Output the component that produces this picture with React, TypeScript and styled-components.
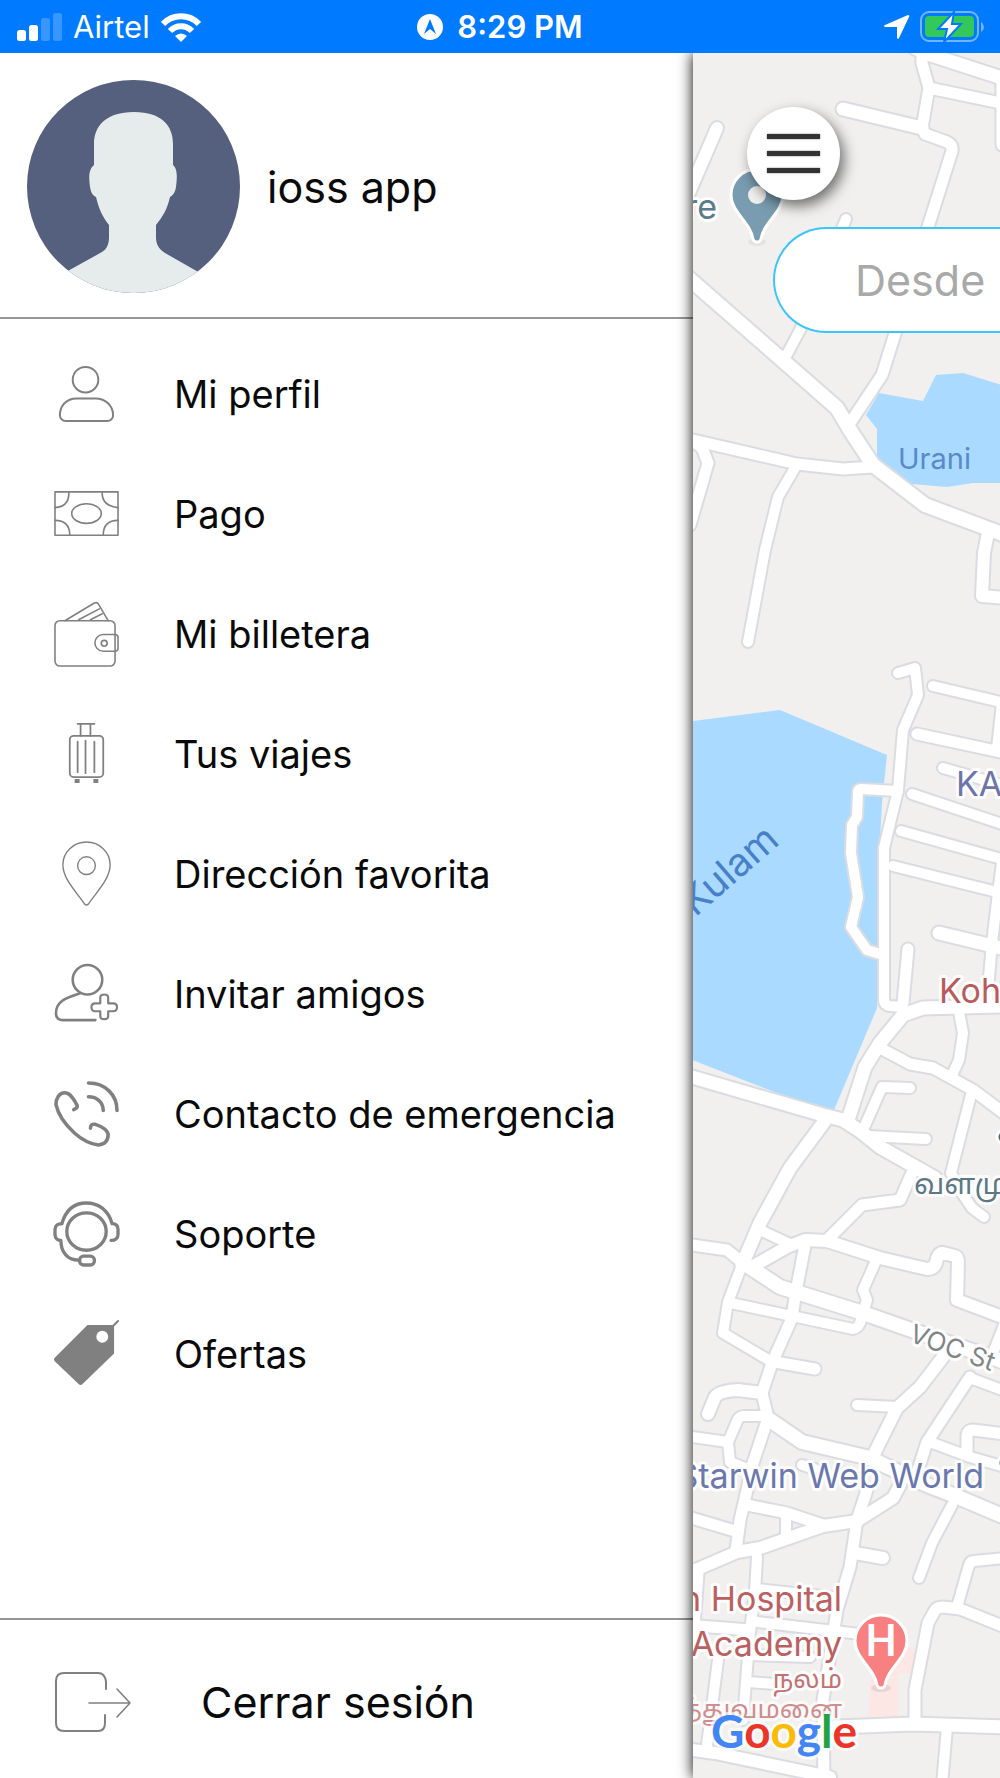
import React from "react";
import styled, { createGlobalStyle } from "styled-components";

const GlobalStyle = createGlobalStyle`
  *, *::before, *::after { box-sizing: border-box; }
  html, body, #root { height: 100%; }
  body {
    margin: 0;
    background: #fff;
    color: #0a0a0a;
    font-family: Inter, "Noto Sans", "Liberation Sans", sans-serif;
  }
`;

const Screen = styled.div`
  display: flex;
  flex-direction: column;
  min-height: 100%;
  overflow: hidden;
`;

/* Status bar */

const StatusBar = styled.header`
  position: relative;
  z-index: 2;
  display: grid;
  grid-template-columns: 1fr auto 1fr;
  align-items: center;
  height: 53px;
  padding: 0 16px;
  background: #007aff;
  color: #fff;
  font-size: 31px;
  line-height: 36px;
`;

const StatusGroup = styled.div<{ $end?: boolean; $gap: number }>`
  display: flex;
  align-items: center;
  justify-content: ${(p) => (p.$end ? "flex-end" : "flex-start")};
  gap: ${(p) => p.$gap}px;
`;

const Clock = styled.time`
  font-weight: 600;
`;

/* Page body */

const Body = styled.div`
  display: flex;
  flex: 1;
`;

const Drawer = styled.aside`
  display: flex;
  flex-direction: column;
  flex: 0 0 69.3%;
`;

const Profile = styled.div`
  display: flex;
  align-items: center;
  gap: 27px;
  padding: 27px 27px 24px;
  border-bottom: 2px solid #969696;
`;

const Avatar = styled.svg`
  flex: none;
  width: 213px;
  height: 213px;
  border-radius: 50%;
`;

const UserName = styled.h1`
  margin: 0;
  font-size: 43px;
  font-weight: 400;
  line-height: 54px;
`;

const MenuList = styled.ul`
  flex: 1;
  margin: 0;
  padding: 15px 0 0;
  list-style: none;
`;

const MenuLink = styled.a`
  display: flex;
  align-items: center;
  gap: 55px;
  height: 120px;
  padding: 0 54px;
  color: inherit;
  font-size: 38px;
  line-height: 48px;
  text-decoration: none;
  white-space: nowrap;
`;

const LineIcon = styled.svg<{ $w?: number; $h?: number }>`
  flex: none;
  width: ${(p) => p.$w ?? 65}px;
  height: ${(p) => p.$h ?? 65}px;
  overflow: visible;
  fill: none;
  stroke: #808080;
  stroke-width: 2;
  stroke-linecap: round;
  stroke-linejoin: round;
`;

const LogoutButton = styled.button`
  display: flex;
  align-items: center;
  gap: 68px;
  height: 160px;
  padding: 6px 55px 0;
  border: 0;
  border-top: 2px solid #969696;
  background: none;
  color: inherit;
  font: inherit;
  font-size: 43px;
  line-height: 54px;
  cursor: pointer;
`;

/* Map side */

const MapPane = styled.main`
  position: relative;
  flex: 1;
  min-width: 0;
  background: #f1f0ef;
  box-shadow: 0 0 14px #000;
`;

const MapCanvas = styled.svg`
  position: absolute;
  inset: 0;
  width: 100%;
  height: 100%;
  font-family: Inter, "Noto Sans", "Noto Sans Tamil", sans-serif;
`;

const MenuToggle = styled.button`
  position: absolute;
  top: 54px;
  left: 54px;
  display: flex;
  flex-direction: column;
  align-items: center;
  justify-content: center;
  gap: 12px;
  width: 93px;
  height: 93px;
  padding: 0;
  border: 0;
  border-radius: 50%;
  background: #fff;
  box-shadow: 4px 6px 14px rgba(0, 0, 0, 0.55);
  cursor: pointer;
`;

const ToggleBar = styled.span`
  width: 53px;
  height: 5px;
  background: #333;
  box-shadow: 0 0 2px #777;
`;

const OriginInput = styled.input`
  position: absolute;
  top: 174px;
  right: 0;
  left: 80px;
  height: 106px;
  padding: 0 0 0 80px;
  border: 2px solid #3cc5fa;
  border-right: 0;
  border-radius: 53px 0 0 53px;
  outline: 0;
  background: #fff;
  font: inherit;
  font-size: 43px;
  &::placeholder { color: #a9a9a9; opacity: 1; }
`;

const Halo = styled.text<{ $faint?: boolean }>`
  paint-order: stroke;
  stroke: #fff;
  stroke-opacity: ${(p) => (p.$faint ? 0.7 : 0.9)};
  stroke-width: 6px;
  stroke-linejoin: round;
`;

type Road = [width: number, d: string];

const roads: Road[] = [
  [10, "M922 45V63L929 88L922 128L925 134L947 142Q953 145 952 151L928 227L893 340L882 375L850 423"],
  [12, "M843 109L922 128"],
  [10, "M929 88L1005 104"],
  [12, "M915 48L925 53L1005 79"],
  [10, "M1002 80V145"],
  [11, "M717 128L688 195"],
  [9, "M846 219L800 330L785 358"],
  [13, "M685 275L740 323L837 408L850 430L873 465L925 505L1005 535"],
  [10, "M693 440L797 464L843 469L873 467"],
  [10, "M690 441Q700 444 703 450L708 463L690 525"],
  [9, "M796 466L778 497L765 550L748 642"],
  [11, "M988 533L984 553L982 596L1005 598"],
  [9, "M898 673L915 668L918 695L903 730L898 790L884 848V1000Q884 1005 890 1006L902 1007"],
  [9, "M898 791L861 789Q858 789 858 792L857 817L852 825L851 853L858 897L851 927L867 950L883 955"],
  [9, "M933 686L1005 703"],
  [10, "M917 734L1005 753"],
  [9, "M1002 703L997 748"],
  [9, "M943 768L1005 786"],
  [9, "M912 794L1005 825"],
  [9, "M901 831L1005 860"],
  [9, "M893 866L1005 894"],
  [9, "M1002 863L998 893L992 943L987 1000"],
  [12, "M939 933L1005 949"],
  [10, "M908 949L903 1003"],
  [12, "M1005 1006L923 1008L903 1015L880 1043L865 1067L848 1120"],
  [10, "M880 1048L910 1064L933 1068L973 1090L1005 1114"],
  [9, "M959 1012L963 1033L959 1060L953 1073"],
  [9, "M971 1095L951 1173L962 1193L972 1208L984 1217"],
  [9, "M910 1088L882 1087L863 1130"],
  [9, "M868 1136L926 1139"],
  [12, "M685 1075L823 1115L843 1120L860 1131L880 1147L935 1178"],
  [12, "M824 1122L790 1168L760 1223L742 1265"],
  [9, "M742 1265L728 1302L723 1333L772 1362"],
  [10, "M912 1173L900 1200L862 1205L827 1240"],
  [11, "M750 1268L787 1247L805 1240L827 1241L880 1258L927 1269Q934 1269 936 1263Q938 1252 943 1253L955 1256Q958 1257 958 1262L957 1300L1005 1318"],
  [9, "M760 1230L790 1244"],
  [10, "M685 1244L727 1250L743 1263L752 1270"],
  [13, "M748 1266L780 1287L863 1313L940 1340L1005 1362"],
  [10, "M805 1245L795 1297L792 1318L772 1363L762 1393L768 1418L753 1463L747 1490L740 1520L736 1550"],
  [9, "M731 1303L853 1329Q858 1328 860 1323L867 1300L863 1290L875 1263"],
  [10, "M775 1362L815 1369"],
  [11, "M762 1393L738 1390Q719 1391 715 1397L708 1414"],
  [9, "M685 1436L728 1442L738 1419Q740 1416 745 1416L763 1416"],
  [9, "M728 1442L730 1462L750 1470"],
  [13, "M767 1418L802 1442L870 1458L888 1467L927 1485L953 1495L1005 1517"],
  [11, "M943 1357L920 1387L897 1408L872 1458"],
  [9, "M857 1405L897 1407"],
  [10, "M970 1377L927 1442L918 1470"],
  [9, "M970 1378L1005 1391"],
  [9, "M930 1442L970 1457L1005 1467"],
  [10, "M967 1453V1435Q968 1430 973 1430L1005 1434"],
  [9, "M1004 1325L993 1353"],
  [9, "M802 1465L815 1469"],
  [10, "M747 1505L787 1513L823 1525"],
  [11, "M685 1574L700 1568L737 1552L760 1548L823 1526L857 1521L893 1498L900 1485"],
  [10, "M685 1516L735 1531"],
  [9, "M786 1515V1537"],
  [10, "M867 1490L857 1520L850 1567L837 1610L823 1700L824 1785"],
  [11, "M855 1553L883 1558"],
  [9, "M952 1505L932 1543L919 1578"],
  [9, "M1005 1558L974 1561Q970 1561 969 1565L957 1607"],
  [10, "M1005 1627L960 1609L943 1607Q936 1607 934 1612L928 1623L915 1690V1720"],
  [12, "M835 1727L863 1726L913 1724L1005 1727"],
  [9, "M947 1727L942 1785"],
  [9, "M757 1557L755 1593L750 1630L743 1720"],
  [9, "M757 1589L840 1598"],
  [10, "M685 1625L750 1630"],
  [9, "M757 1622L860 1634"],
  [10, "M698 1573L693 1640"],
  [9, "M718 1660L707 1745"],
  [9, "M748 1682L775 1684"],
  [9, "M750 1655L810 1657"],
  [11, "M685 1749L715 1753L830 1777"],
];

function CityMap() {
  return (
    <MapCanvas viewBox="693 53 307 1725" preserveAspectRatio="xMinYMin slice" role="img" aria-label="Mapa">
      <g fill="#aadaff">
        <path d="M879 393L923 401L936 375L963 373L1005 386V483H973L947 487L912 484L880 465L877 458V429L866 415Z" />
        <path d="M685 722L780 710L887 755L882 803L880 840L877 1008L834 1110L787 1097L685 1057Z" />
      </g>
      <path fill="#fde7e5" d="M910 1647L917 1650L912 1673H898V1717H868L870 1680Z" />
      <g fill="none" stroke="#dadce1" strokeLinecap="round" strokeLinejoin="round">
        {roads.map(([w, d]) => <path key={d} d={d} strokeWidth={w + 5} />)}
      </g>
      <g fill="none" stroke="#fff" strokeLinecap="round" strokeLinejoin="round">
        {roads.map(([w, d]) => <path key={d} d={d} strokeWidth={w + 1} />)}
      </g>

      <circle cx="1004" cy="1137" r="7" fill="#4b6470" stroke="#fff" strokeWidth="3" />
      <circle cx="1007" cy="1463" r="9" fill="#5b6ed0" stroke="#fff" strokeWidth="3" />

      <ellipse cx="757" cy="242" rx="9" ry="4" fill="#000" opacity=".05" />
      <path fill="#7a9cb0" stroke="#fff" strokeWidth="3" d="M757 169a26 26 0 0 1 26 26c0 17-20 28-22 44-1 4-7 4-8 0-2-16-22-27-22-44a26 26 0 0 1 26-26Z" />
      <circle cx="757" cy="195" r="9" fill="#f1f0ef" />

      <ellipse cx="881" cy="1688" rx="10" ry="4" fill="#000" opacity=".08" />
      <path fill="#f98080" stroke="#fff" strokeWidth="3" d="M881 1615a26 26 0 0 1 26 26c0 17-20 28-22 44-1 4-7 4-8 0-2-16-22-27-22-44a26 26 0 0 1 26-26Z" />
      <text x="881" y="1656" textAnchor="middle" fontSize="44" fontWeight="500" fontFamily="Roboto, sans-serif" fill="#fff">H</text>

      <Halo x="717" y="219" textAnchor="end" fontSize="34" fill="#5c7b8a">re</Halo>
      <text x="898" y="469" fontSize="29" fill="#5889ca">Urani</text>
      <text transform="translate(781 843) rotate(-41)" textAnchor="end" fontSize="39" fill="#4880c8">Kulam</text>
      <Halo x="956" y="796" fontSize="34" fill="#6d75a8">KA</Halo>
      <Halo x="939" y="1003" fontSize="34" fill="#b85b5c">Koh</Halo>
      <Halo x="914" y="1194" fontSize="29" fill="#5c7886">வளமு</Halo>
      <Halo transform="translate(908 1341) rotate(20)" fontSize="26" fill="#7f8687">VOC St</Halo>
      <Halo x="984" y="1488" textAnchor="end" fontSize="34" fill="#6b78ad">Starwin Web World</Halo>
      <Halo x="842" y="1611" textAnchor="end" fontSize="34" fill="#bb6061">n Hospital</Halo>
      <Halo x="842" y="1656" textAnchor="end" fontSize="34" fill="#bb6061">Academy</Halo>
      <Halo x="842" y="1688" textAnchor="end" fontSize="26" fill="#c27272">நலம்</Halo>
      <Halo $faint x="842" y="1718" textAnchor="end" fontSize="26" fill="#d08d8d">மருத்துவமனை</Halo>

      <Halo $faint x="711" y="1748" fontSize="46" fontWeight="700" fontFamily="Lato, sans-serif">
        <tspan fill="#4285f4">G</tspan>
        <tspan fill="#ea3529">o</tspan>
        <tspan fill="#fbbb05">o</tspan>
        <tspan fill="#4285f4">g</tspan>
        <tspan fill="#1fa345">l</tspan>
        <tspan fill="#ea3529">e</tspan>
      </Halo>
    </MapCanvas>
  );
}

const menuItems: { label: string; icon: React.ReactNode }[] = [
  {
    label: "Mi perfil",
    icon: (
      <>
        <circle cx="32" cy="18" r="13" />
        <path d="M23 37h19c11 0 18 8 18 17a6 6 0 0 1-6 6H12a6 6 0 0 1-6-6c0-9 6-17 17-17Z" />
      </>
    ),
  },
  {
    label: "Pago",
    icon: (
      <g strokeWidth="1.6">
        <rect x="1" y="10" width="64" height="44" />
        <ellipse cx="33" cy="32" rx="15" ry="10" />
        <path d="M15 10q1 15-14 16M49 10q-1 14 16 16M1 39q15 0 15 15M65 39q-15 0-15 15" />
      </g>
    ),
  },
  {
    label: "Mi billetera",
    icon: (
      <g strokeWidth="1.6">
        <rect x="1" y="19" width="61" height="46" rx="5" />
        <path d="M11 19L41 1q3-1 4 1l10 17M25 18l21-11M37 18l12-6" />
        <path d="M62 33H50a8 8 0 0 0 0 17h12q3 0 3-3V36q0-3-3-3Z" />
        <circle cx="51" cy="42" r="3" />
      </g>
    ),
  },
  {
    label: "Tus viajes",
    icon: (
      <g strokeWidth="1.8">
        <path d="M24 2h17M27 2v12M37 2v12M24 20v31M32 19v33M41 20v31" />
        <rect x="16" y="14" width="34" height="42" rx="4" />
        <path d="M21 58h5v4h-5zM40 58h5v4h-5z" fill="#808080" stroke="none" />
      </g>
    ),
  },
  {
    label: "Dirección favorita",
    icon: (
      <g strokeWidth="1.4">
        <path d="M31 63C24 52 9 38 9 23a24 23 0 0 1 48 0c0 15-15 29-22 40q-2 2-4 0Z" />
        <circle cx="33" cy="24" r="9" />
      </g>
    ),
  },
  {
    label: "Invitar amigos",
    icon: (
      <g strokeWidth="2.6">
        <circle cx="34" cy="18" r="15" />
        <path d="M26 32C14 36 2 39 2 52q0 7 7 7h33" />
        <path d="M47 36q0-3 4-3t4 3v6h5q4 0 4 4t-4 4h-5v5q0 3-4 3t-4-3v-5h-5q-4 0-4-4t4-4h5Z" strokeWidth="2.2" />
      </g>
    ),
  },
  {
    label: "Contacto de emergencia",
    icon: (
      <g strokeWidth="3.6">
        <path d="M20 28c5-2 4-4 2-7-3-5-6-10-11-10C5 11 2 17 2 23c2 9 9 20 19 29 9 8 17 11 24 12 8-1 10-6 10-11-1-4-7-8-13-10q-5-1-5 4" />
        <path d="M35 1c17 0 29 12 29 28M35 15c9 0 15 6 15 14" />
      </g>
    ),
  },
  {
    label: "Soporte",
    icon: (
      <g strokeWidth="3.4">
        <ellipse cx="33" cy="30" rx="20" ry="19" />
        <path d="M8 22C12 8 21 1 33 1s22 7 26 21c4 0 6 2 6 6v5c0 4-3 6-7 6M8 22c-4 0-7 2-7 6v5c0 4 3 6 6 6 0 11 6 20 18 20" />
        <rect x="26" y="55" width="15" height="9" rx="4" />
      </g>
    ),
  },
  {
    label: "Ofertas",
    icon: (
      <>
        <path d="M34 3h27v29L29 63q-2 2-4 0L1 40q-2-2 0-4Z" fill="#808080" stroke="none" />
        <path d="M60 4l5-5" />
        <circle cx="49" cy="15" r="6" fill="#fff" stroke="none" />
      </>
    ),
  },
];

export default function App() {
  return (
    <Screen>
      <GlobalStyle />
      <StatusBar>
        <StatusGroup $gap={11}>
          <svg width="46" height="30" viewBox="0 0 46 30" fill="#fff" aria-hidden="true">
            <rect x="1" y="18" width="9" height="11" rx="2.5" />
            <rect x="13" y="13" width="9" height="16" rx="2.5" />
            <rect x="25" y="6" width="9" height="23" rx="2.5" opacity=".22" />
            <rect x="37" y="1" width="9" height="28" rx="2.5" opacity=".22" />
          </svg>
          <span>Airtel</span>
          <svg width="40" height="30" viewBox="0 0 40 30" fill="none" stroke="#fff" strokeWidth="6" aria-hidden="true">
            <path d="M2 12a25 25 0 0 1 36 0M9 19a15 15 0 0 1 22 0" />
            <path d="M20 30l-6-6q6-5 12 0Z" fill="#fff" stroke="none" />
          </svg>
        </StatusGroup>
        <StatusGroup $gap={14}>
          <svg width="26" height="26" viewBox="0 0 26 26" aria-hidden="true">
            <circle cx="13" cy="13" r="13" fill="#fff" />
            <path d="M13 5l6 15-6-5-6 5Z" fill="#007aff" />
          </svg>
          <Clock>8:29 PM</Clock>
        </StatusGroup>
        <StatusGroup $end $gap={10}>
          <svg width="26" height="26" viewBox="0 0 26 26" aria-hidden="true">
            <path d="M24 1Q26 1 25 3L15 24q-1 2-2 0V13H1q-2-1 0-2Z" fill="#fff" />
          </svg>
          <svg width="64" height="32" viewBox="0 0 64 32" aria-hidden="true">
            <rect x="1" y="1" width="57" height="29" rx="8" fill="none" stroke="#fff" strokeOpacity=".45" strokeWidth="2" />
            <path d="M61 11q3 2 3 5t-3 5Z" fill="#fff" opacity=".45" />
            <rect x="5" y="5" width="49" height="21" rx="4" fill="#34c759" />
            <path d="M34 1L18 18h9l-3 13 17-18h-9Z" fill="#fff" stroke="#007aff" strokeWidth="2" />
          </svg>
        </StatusGroup>
      </StatusBar>

      <Body>
        <Drawer>
          <Profile>
            <Avatar viewBox="0 0 213 213" role="img" aria-label="Foto de perfil">
              <rect width="213" height="213" fill="#55607f" />
              <path
                fill="#e6ecec"
                d="M107 32c28 0 39 14 39 32v21c5 4 4 14 3 22-1 6-3 8-6 10-3 13-7 19-14 28v12c0 8 3 12 9 16l42 24v20H30v-20l45-25c5-3 7-8 7-15v-12c-7-9-10-16-13-28-4-2-5-5-6-10-1-8-2-17 4-22V64c0-18 12-32 40-32Z"
              />
            </Avatar>
            <UserName>ioss app</UserName>
          </Profile>

          <MenuList>
            {menuItems.map(({ label, icon }) => (
              <li key={label}>
                <MenuLink href="#">
                  <LineIcon viewBox="0 0 66 66" aria-hidden="true">{icon}</LineIcon>
                  {label}
                </MenuLink>
              </li>
            ))}
          </MenuList>

          <LogoutButton type="button">
            <LineIcon $w={78} $h={60} viewBox="0 0 78 60" aria-hidden="true">
              <path d="M51 17V10q-1-9-8-9H9Q1 1 1 9v42q0 8 8 8h34q7 0 7-8v-8" />
              <path d="M34 31h41M62 17l13 14-13 14" strokeWidth="1.6" />
            </LineIcon>
            Cerrar sesión
          </LogoutButton>
        </Drawer>

        <MapPane>
          <CityMap />
          <MenuToggle type="button" aria-label="Menú">
            <ToggleBar />
            <ToggleBar />
            <ToggleBar />
          </MenuToggle>
          <OriginInput type="text" placeholder="Desde" aria-label="Desde" />
        </MapPane>
      </Body>
    </Screen>
  );
}
